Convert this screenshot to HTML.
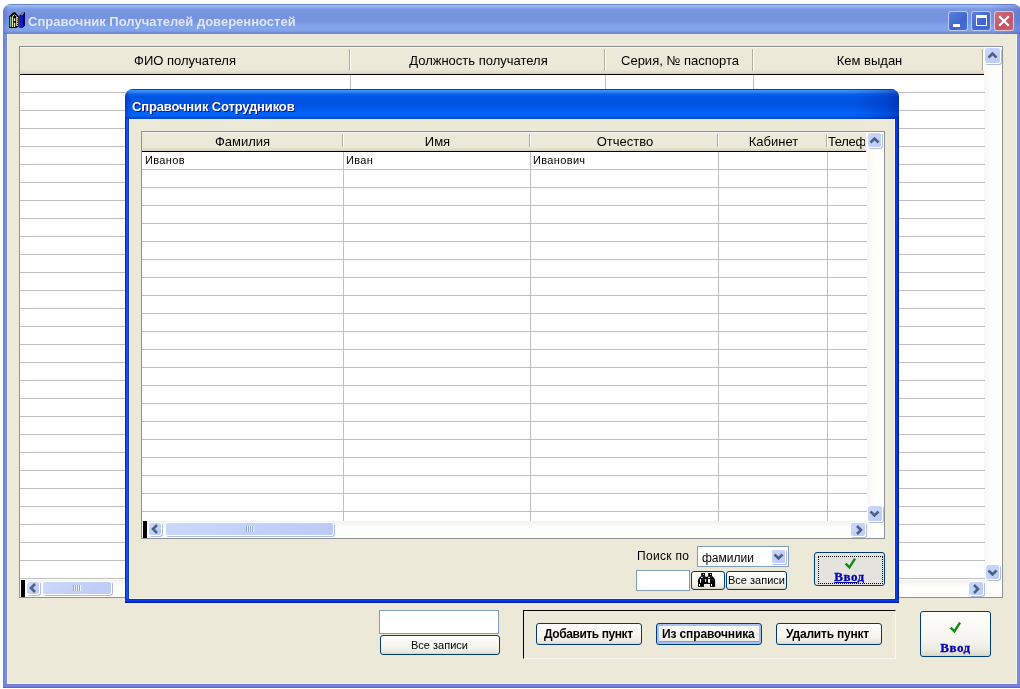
<!DOCTYPE html>
<html lang="ru">
<head>
<meta charset="utf-8">
<title>Справочник Получателей доверенностей</title>
<style>
html,body{margin:0;padding:0;}
body{width:1020px;height:689px;overflow:hidden;background:#fff;position:relative;
  font-family:"Liberation Sans",sans-serif;color:#000;}
*{box-sizing:border-box;}
.abs{position:absolute;}
.hc,.cell,.ttl,.vv,.lbl,.t{will-change:transform;}
.t{display:inline-block;}
/* ---------- outer (inactive) window ---------- */
#win{left:3px;top:4px;width:1018px;height:684px;border-radius:8px 8px 0 0;overflow:hidden;
  background:#ece9d8;}
#win .tb{left:0;top:0;width:100%;height:30px;
  background:linear-gradient(to right,rgba(60,70,170,.3) 0,rgba(60,70,170,0) 6px,rgba(60,70,170,0) calc(100% - 30px),rgba(60,70,170,.3) 100%),linear-gradient(to bottom,#6a86cf 0px,#6a86cf 1px,#9dbaf2 1px,#9bb7f0 2px,#8aa8ea 3.5px,#7b9ae3 5px,#7894dc 9px,#7691df 12px,#7795e1 17px,#7ea0e8 21px,#83a6ec 24px,#80a0e7 27px,#7289d3 29px,#6c82cc 30px);}
#win .fl{left:0;top:30px;width:4px;bottom:0;background:linear-gradient(to right,#6272cb 0,#7189e0 1px,#7890e0 2px,#7a86cb 4px);}
#win .fr{left:1014px;top:30px;width:4px;bottom:0;background:linear-gradient(to right,#7a86cb 0,#7890e0 2px,#7189e0 3px,#6272cb 4px);}
#win .fb{left:0;top:680px;width:100%;height:4px;background:linear-gradient(to bottom,#6b78d0 0,#7884e0 1.5px,#6f7cd8 3px,#4b55a8 4px);}
#win .hl{left:4px;top:30px;width:1010px;height:650px;border:1px solid #f4f3f3;border-top:none;}
.ttl{font-weight:bold;font-size:13px;white-space:nowrap;line-height:16px;letter-spacing:0px;}
#win .ttl{left:25px;top:10px;color:#dfe6f8;}
.cb{width:20px;height:20px;border-radius:3px;border:1px solid rgba(235,240,255,.7);top:6.5px;}
/* ---------- grids ---------- */
.grid{background:#fff;border:1px solid #8b9399;overflow:hidden;}
.hdr{left:0;top:0;height:28px;box-shadow:inset 0 1px 0 #f3f6f4;background:linear-gradient(to bottom,#ece9d8 0,#ece9d8 22px,#e2dfcd 25px,#d0cdbc 27px,#000 27px,#000 28px);}
.hc{top:0;height:27px;font-size:13px;text-align:center;line-height:16px;padding-top:6px;white-space:nowrap;}
.hs{top:2px;width:2px;height:22px;border-left:1px solid #b0ad9e;border-right:1px solid #fff;}
.vl{width:1px;background:#c0c0c0;}
.rows{background:repeating-linear-gradient(to bottom,transparent 0,transparent 17px,#c0c0c0 17px,#c0c0c0 18px);}
.cell{font-size:11px;line-height:13px;white-space:nowrap;letter-spacing:0.35px;}
/* scrollbars */
.trk{background:linear-gradient(to right,#f8f7f3,#fefefb 40%,#fefefb);}
.trkh{background:linear-gradient(to bottom,#f3f1ec,#fefefb 40%,#fefefb);}
.sb{background:linear-gradient(135deg,#cad8fb,#bccbf6);border:1px solid #fff;border-radius:3px;box-shadow:1px 1px 0 rgba(125,145,205,.6);}
.sb svg{position:absolute;left:0;top:0;}
/* ---------- dialog ---------- */
#dlg{left:125px;top:89px;width:774px;height:514px;border-radius:8px 8px 0 0;overflow:hidden;background:#ece9d8;}
#dlg .tb{left:0;top:0;width:100%;height:30px;
  background:linear-gradient(to right,rgba(0,20,150,.35) 0,rgba(0,20,150,0) 6px,rgba(0,20,150,0) calc(100% - 45px),rgba(0,25,150,.28) calc(100% - 12px),rgba(0,20,140,.5) 100%),linear-gradient(to bottom,#0a3fb5 0,#0a3fb5 1px,#3593ff 1px,#3290fd 2px,#2480f5 3.5px,#0a60e8 5px,#0055e5 8px,#0054e3 16px,#005bf0 20px,#0063fd 24px,#0065fd 26px,#0053da 28.5px,#0040ba 30px);}
#dlg .fl{left:0;top:30px;width:4px;bottom:0;background:linear-gradient(to right,#0a28c0 0,#0a28c0 1px,#1450ee 1px,#1450ee 3px,#0a3cd0 3px,#0a3cd0 4px);}
#dlg .fr{left:770px;top:30px;width:4px;bottom:0;background:linear-gradient(to right,#0a2fd0 0,#0a2fd0 1px,#0a3ee2 1px,#0a3ee2 2px,#0a32d0 2px,#0a32d0 3px,#001ca8 3px,#001ca8 4px);}
#dlg .fb{left:0;top:510px;width:100%;height:4px;background:linear-gradient(to bottom,#0a34d0 0,#0a34d0 1px,#0a40e4 1px,#0a40e4 2px,#0a34d2 2px,#0a34d2 3px,#001ca0 3px,#001ca0 4px);}
#dlg .hl{left:4px;top:30px;width:766px;height:480px;border:1px solid #f6f5f3;border-top:none;}
#dlg .ttl{left:7px;top:10px;letter-spacing:-0.15px;color:#fff;text-shadow:1px 1px 0 #0a1883;}
/* ---------- buttons ---------- */
.btn{border:1px solid #003c74;border-radius:3px;background:linear-gradient(to bottom,#fefefd 0,#f6f5f0 60%,#ebe9df 88%,#d9d4c6 100%);
  text-align:center;white-space:nowrap;}
.btn.b{font-weight:bold;font-size:12px;line-height:14px;padding-top:3px;padding-right:2px;}
.btn.s{font-size:11px;line-height:13px;padding-top:3px;letter-spacing:0;}
.inp{background:#fff;border:1px solid #7f9db9;}
.vv{font-family:"Liberation Serif",serif;font-weight:bold;font-size:13px;color:#0000b4;-webkit-text-stroke:0.3px #0000b4;line-height:14px;white-space:nowrap;}
</style>
</head>
<body>

<!-- ======================= OUTER WINDOW ======================= -->
<div id="win" class="abs">
  <div class="tb abs"></div>
  <div class="fl abs"></div><div class="fr abs"></div><div class="fb abs"></div>
  <div class="hl abs"></div>
  <!-- app icon -->
  <svg class="abs" style="left:6px;top:7.8px" width="16" height="16" viewBox="0 0 16 16">
    <path d="M0 15.9 V4.6 L4.5 0.2 H6.2 L9.9 4.2 V14.5 L7 15.9 Z" fill="#000"/>
    <rect x="0.8" y="4.6" width="1.1" height="10.4" fill="#7fe0c8"/>
    <rect x="2.7" y="4.9" width="1.3" height="10.1" fill="#f6f07a"/>
    <path d="M3.4 5 L4.6 3 L5.6 2.2" stroke="#f6f07a" stroke-width="1" fill="none"/>
    <rect x="4.8" y="6.3" width="1.4" height="2.8" fill="#f0f0e0"/>
    <rect x="4.8" y="10.8" width="1.4" height="4.2" fill="#f0f0e0"/>
    <rect x="7.1" y="4.9" width="2.1" height="9.1" fill="#d8d4b0"/>
    <rect x="6.3" y="3" width="0.8" height="0.8" fill="#fff"/><rect x="7.3" y="3.9" width="0.8" height="0.8" fill="#fff"/>
    <rect x="8.1" y="6.3" width="0.9" height="0.9" fill="#000"/><rect x="8.1" y="8.2" width="0.9" height="0.9" fill="#000"/>
    <rect x="8.1" y="10.1" width="0.9" height="0.9" fill="#000"/><rect x="8.1" y="12" width="0.9" height="0.9" fill="#000"/>
    <path d="M10.4 3.7 L13.7 0.4 L16 0.2 V13.6 L13.5 15.7 H10.4 Z" fill="#000"/>
    <path d="M10.8 4.4 L14.4 1.2 V15.2 H10.8 Z" fill="#0a18c8"/>
    <path d="M14.4 1.2 L15.6 0.6 V13.6 L14.4 15.2 Z" fill="#000078"/>
    <path d="M12.3 2.9 L14.8 0.8" stroke="#fff" stroke-width="0.9"/>
  </svg>
  <div class="ttl abs">Справочник Получателей доверенностей</div>
  <!-- caption buttons -->
  <div class="cb abs" style="left:945.3px;background:linear-gradient(135deg,#5d80dc,#3f66d0 60%,#4a70d6)">
    <div class="abs" style="left:4px;top:12px;width:7px;height:3px;background:#fff"></div></div>
  <div class="cb abs" style="left:968.4px;background:linear-gradient(135deg,#5d80dc,#3f66d0 60%,#4a70d6)">
    <div class="abs" style="left:3.5px;top:3.5px;width:11px;height:11px;border:1px solid #fff;border-top-width:3px"></div></div>
  <div class="cb abs" style="left:991.4px;background:linear-gradient(135deg,#d0707c,#c05566 60%,#c86070)">
    <svg class="abs" style="left:0;top:0" width="18" height="18" viewBox="0 0 18 18"><path d="M4.2 4.2 L13.8 13.8 M13.8 4.2 L4.2 13.8" stroke="#fff" stroke-width="2.2" fill="none"/></svg></div>

  <!-- outer grid -->
  <div class="grid abs" style="left:16px;top:42px;width:984px;height:552px">
    <div class="trk abs" style="left:964px;top:0;width:18px;height:550px"></div>
    <div class="hdr abs" style="width:964px"></div>
    <div class="hc abs" style="left:0;width:330px">ФИО получателя</div>
    <div class="hc abs" style="left:331px;width:255px">Должность получателя</div>
    <div class="hc abs" style="left:586px;width:148px">Серия, № паспорта</div>
    <div class="hc abs" style="left:734px;width:231px">Кем выдан</div>
    <div class="hs abs" style="left:329px"></div><div class="hs abs" style="left:584px"></div>
    <div class="hs abs" style="left:732px"></div><div class="hs abs" style="left:962px"></div>
    <div class="rows abs" style="left:0;top:28px;width:965px;height:504px"></div>
    <div class="vl abs" style="left:330px;top:28px;height:504px"></div>
    <div class="vl abs" style="left:585px;top:28px;height:504px"></div>
    <div class="vl abs" style="left:733px;top:28px;height:504px"></div>
    <!-- v scroll buttons -->
    <div class="sb abs" style="left:964px;top:0px;width:17px;height:17px">
      <svg style="left:1px;top:1px" width="13" height="13" viewBox="0 0 13 13"><path d="M2.5 8.5 L6.5 4.5 L10.5 8.5" stroke="#4d6185" stroke-width="2.6" fill="none"/></svg></div>
    <div class="sb abs" style="left:965px;top:517px;width:15px;height:16px">
      <svg style="top:1.2px" width="13" height="13" viewBox="0 0 13 13"><path d="M2.5 4.5 L6.5 8.5 L10.5 4.5" stroke="#4d6185" stroke-width="2.6" fill="none"/></svg></div>
    <!-- h scroll -->
    <div class="trkh abs" style="left:0;top:533px;width:965px;height:17px"></div>
    <div class="abs" style="left:1px;top:533px;width:4px;height:17px;background:#000"></div>
    <div class="sb abs" style="left:6px;top:534px;width:14px;height:14px">
      <svg width="12" height="12" viewBox="0 0 12 12"><path d="M8 2 L4 6 L8 10" stroke="#4d6185" stroke-width="2.6" fill="none"/></svg></div>
    <div class="sb abs" style="left:22px;top:534px;width:70px;height:14px">
      <div class="abs" style="left:30px;top:3px;width:8px;height:6px;background:repeating-linear-gradient(to right,#8ea4dc 0,#8ea4dc 1px,#eef3ff 1px,#eef3ff 2px)"></div></div>
    <div class="sb abs" style="left:948px;top:534px;width:16px;height:15px">
      <svg style="left:1.4px;top:0.6px" width="12" height="12" viewBox="0 0 12 12"><path d="M4 2 L8 6 L4 10" stroke="#4d6185" stroke-width="2.6" fill="none"/></svg></div>
  </div>

  <!-- bottom controls -->
  <div class="inp abs" style="left:376px;top:606px;width:120px;height:24px"></div>
  <div class="btn s abs" style="left:377px;top:631px;width:120px;height:20px;padding-right:2px"><span class="t">Все записи</span></div>
  <div class="abs" style="left:520px;top:606px;width:373px;height:49px;border-left:1px solid #000;border-top:1px solid #000;border-right:1px solid #f7f5ee;border-bottom:1px solid #f7f5ee"></div>
  <div class="btn b abs" style="left:533px;top:619px;width:106px;height:22px;letter-spacing:-0.42px"><span class="t">Добавить пункт</span></div>
  <div class="btn b abs" style="left:653px;top:619px;width:106px;height:22px;box-shadow:inset 0 0 0 2px #a7c1f5,inset 0 -1px 0 2px #7b9be6;letter-spacing:-0.13px"><span class="t">Из справочника</span></div>
  <div class="btn b abs" style="left:773px;top:619px;width:106px;height:22px;letter-spacing:-0.2px"><span class="t">Удалить пункт</span></div>
  <div class="btn abs" style="left:917px;top:607px;width:71px;height:46px">
    <svg class="abs" style="left:28px;top:9px" width="13" height="13" viewBox="0 0 13 13"><path d="M1.6 6.6 L5.4 10.4 L11 1.6" stroke="#128a12" stroke-width="2.4" fill="none"/></svg>
    <div class="vv abs" style="left:0;width:69px;top:29px;letter-spacing:0.5px">Ввод</div>
  </div>
</div>

<!-- ======================= DIALOG ======================= -->
<div id="dlg" class="abs">
  <div class="tb abs"></div>
  <div class="fl abs"></div><div class="fr abs"></div><div class="fb abs"></div>
  <div class="hl abs"></div>
  <div class="ttl abs">Справочник Сотрудников</div>

  <div class="grid abs" style="left:16px;top:42px;width:744px;height:408px">
    <div class="trk abs" style="left:725px;top:0;width:18px;height:406px"></div>
    <div class="hdr abs" style="width:724px;height:20px;background:linear-gradient(to bottom,#ece9d8 0,#ece9d8 15px,#e2dfcd 17px,#d0cdbc 19px,#000 19px,#000 20px)"></div>
    <div class="hc abs" style="left:0;width:201px;padding-top:2px;height:19px">Фамилия</div>
    <div class="hc abs" style="left:202px;width:187px;padding-top:2px;height:19px">Имя</div>
    <div class="hc abs" style="left:389px;width:188px;padding-top:2px;height:19px">Отчество</div>
    <div class="hc abs" style="left:577px;width:109px;padding-top:2px;height:19px">Кабинет</div>
    <div class="hc abs" style="left:686px;width:37px;padding-top:2px;height:19px;text-align:left;overflow:hidden;letter-spacing:-0.35px">Телефон</div>
    <div class="hs abs" style="left:200px;top:2px;height:13px"></div><div class="hs abs" style="left:387px;top:2px;height:13px"></div>
    <div class="hs abs" style="left:575px;top:2px;height:13px"></div><div class="hs abs" style="left:684px;top:2px;height:13px"></div>
    <div class="rows abs" style="left:0;top:20px;width:725px;height:360px"></div>
    <div class="vl abs" style="left:201px;top:20px;height:369px"></div>
    <div class="vl abs" style="left:388px;top:20px;height:369px"></div>
    <div class="vl abs" style="left:576px;top:20px;height:369px"></div>
    <div class="vl abs" style="left:685px;top:20px;height:369px"></div>
    <div class="cell abs" style="left:2.5px;top:22px">Иванов</div>
    <div class="cell abs" style="left:204px;top:22px">Иван</div>
    <div class="cell abs" style="left:391px;top:22px">Иванович</div>
    <!-- v scroll -->
    <div class="sb abs" style="left:725px;top:0px;width:15px;height:16px">
      <svg style="left:-0.2px;top:0.5px" width="13" height="13" viewBox="0 0 13 13"><path d="M2.5 8.5 L6.5 4.5 L10.5 8.5" stroke="#4d6185" stroke-width="2.6" fill="none"/></svg></div>
    <div class="sb abs" style="left:725px;top:373px;width:16px;height:17px">
      <svg style="left:-0.3px;top:1.2px" width="13" height="13" viewBox="0 0 13 13"><path d="M2.5 4.5 L6.5 8.5 L10.5 4.5" stroke="#4d6185" stroke-width="2.6" fill="none"/></svg></div>
    <!-- h scroll -->
    <div class="trkh abs" style="left:0;top:389px;width:725px;height:17px"></div>
    <div class="abs" style="left:1px;top:389px;width:4px;height:17px;background:#000"></div>
    <div class="sb abs" style="left:6px;top:390px;width:14px;height:14px">
      <svg width="12" height="12" viewBox="0 0 12 12"><path d="M8 2 L4 6 L8 10" stroke="#4d6185" stroke-width="2.6" fill="none"/></svg></div>
    <div class="sb abs" style="left:23px;top:390px;width:169px;height:14px">
      <div class="abs" style="left:80px;top:3px;width:8px;height:6px;background:repeating-linear-gradient(to right,#8ea4dc 0,#8ea4dc 1px,#eef3ff 1px,#eef3ff 2px)"></div></div>
    <div class="sb abs" style="left:708px;top:390px;width:16px;height:15px">
      <svg style="left:1.6px;top:0.5px" width="12" height="12" viewBox="0 0 12 12"><path d="M4 2 L8 6 L4 10" stroke="#4d6185" stroke-width="2.6" fill="none"/></svg></div>
  </div>

  <!-- search controls -->
  <div class="abs" style="left:512px;top:460px;font-size:12px;line-height:14px;white-space:nowrap;letter-spacing:0.3px;will-change:transform">Поиск по</div>
  <div class="inp abs" style="left:572px;top:457px;width:92px;height:21px">
    <div class="abs" style="left:4px;top:3.7px;font-size:12px;line-height:15px;white-space:nowrap;will-change:transform">фамилии</div>
    <div class="sb abs" style="left:73px;top:2px;width:15px;height:15px;border-radius:2px">
      <svg width="13" height="13" viewBox="0 0 13 13"><path d="M2.5 4.5 L6.5 8.5 L10.5 4.5" stroke="#4d6185" stroke-width="2.6" fill="none"/></svg></div>
  </div>
  <div class="inp abs" style="left:511px;top:481px;width:54px;height:21px"></div>
  <div class="btn abs" style="left:566px;top:482px;width:34px;height:19px">
    <svg class="abs" style="left:6px;top:1px" width="18" height="15" viewBox="0 0 18 15">
      <g fill="#000"><rect x="3.2" y="0" width="3.8" height="3.7"/><rect x="10.2" y="0" width="3.8" height="3.7"/>
      <path d="M2.2 3.4 H7.9 V6.5 H0 Z"/><rect x="0" y="6.3" width="8.1" height="4.7"/><rect x="0" y="10.8" width="5.9" height="3.1"/>
      <rect x="7.9" y="3.9" width="2.6" height="6.9"/>
      <path d="M9.1 3.4 H14.9 L17.1 6.5 H9.1 Z"/><rect x="9.1" y="6.3" width="8" height="4.7"/><rect x="12" y="10.8" width="5.1" height="3.1"/></g>
      <g fill="#fff"><rect x="5.1" y="1" width="0.9" height="0.9"/><rect x="12.2" y="1" width="0.9" height="0.9"/>
      <rect x="3" y="4.1" width="2" height="0.8"/><rect x="10" y="4.1" width="2.2" height="0.8"/>
      <rect x="2" y="5.9" width="1" height="3.9"/><rect x="7.1" y="6.1" width="1" height="2.8"/><rect x="10" y="5.9" width="2" height="3.9"/>
      <rect x="1" y="11" width="1" height="2"/><rect x="13" y="11" width="1" height="2"/></g>
    </svg></div>
  <div class="btn s abs" style="left:601px;top:482px;width:61px;height:19px;letter-spacing:0;padding-right:1px;padding-top:2px"><span class="t">Все записи</span></div>
  <div class="btn abs" style="left:689px;top:463px;width:71px;height:34px;background:#e4e3dd">
    <div class="abs" style="left:3px;top:3px;width:65px;height:28px;border:1px dotted #000"></div>
    <svg class="abs" style="left:29px;top:4px" width="13" height="13" viewBox="0 0 13 13"><path d="M1.6 6.6 L5.4 10.4 L11 1.6" stroke="#128a12" stroke-width="2.4" fill="none"/></svg>
    <div class="vv abs" style="left:0;width:69px;top:17px;text-decoration:underline;letter-spacing:0.5px">Ввод</div>
  </div>
</div>

</body>
</html>
